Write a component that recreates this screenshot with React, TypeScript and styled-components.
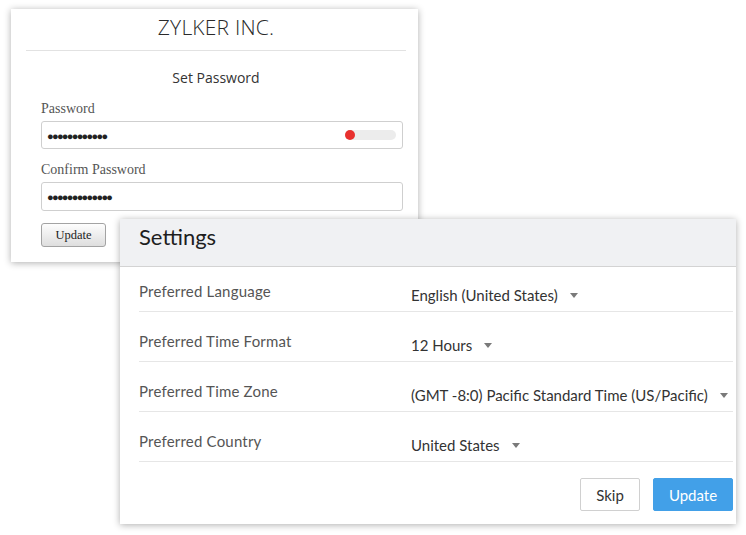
import styled, { createGlobalStyle } from "styled-components";

const GlobalStyle = createGlobalStyle`
  html, body { margin: 0; padding: 0; background: #fff; }
  * { box-sizing: border-box; }
`;

const Canvas = styled.div`
  position: relative;
  width: 746px;
  height: 535px;
  background: #fff;
  overflow: hidden;
`;

const Window = styled.div<{ $left: number; $top: number; $w: number; $h: number }>`
  position: absolute;
  left: ${(p) => p.$left}px;
  top: ${(p) => p.$top}px;
  width: ${(p) => p.$w}px;
  height: ${(p) => p.$h}px;
  background: #fff;
  box-shadow: 0 1px 7px rgba(0, 0, 0, 0.32);
`;

/* ---------- password card ---------- */

const PasswordCard = styled(Window)`
  padding: 0 12px 0 15px;
  display: flex;
  flex-direction: column;
`;

const Brand = styled.div`
  height: 42px;
  border-bottom: 1px solid #e2e2e2;
  display: flex;
  align-items: center;
  justify-content: center;
  padding-bottom: 5px;
  font-family: "Open Sans", sans-serif;
  font-weight: 300;
  font-size: 21px;
  color: #2a2a2a;
  letter-spacing: 0.2px;
`;

const Form = styled.div`
  display: flex;
  flex-direction: column;
  padding: 0 3px 0 15px;
`;

const FormTitle = styled.div`
  margin: 17px -3px 0 -15px;
  text-align: center;
  font-family: "Open Sans", sans-serif;
  font-size: 14px;
  line-height: 20px;
  color: #333;
`;

const FieldLabel = styled.div`
  margin-top: 13px;
  font-family: "Liberation Serif", serif;
  font-size: 14px;
  line-height: 16px;
  color: #555;
`;

const Input = styled.div<{ $h?: number }>`
  margin-top: 4px;
  height: ${(p) => p.$h ?? 28}px;
  border: 1px solid #cfcfcf;
  border-radius: 3px;
  display: flex;
  align-items: center;
  justify-content: space-between;
  padding: 0 6px 0 5px;
`;

const Dots = styled.span`
  font-family: "Liberation Sans", sans-serif;
  font-size: 11px;
  letter-spacing: -1.7px;
  color: #222;
  padding-top: 1px;
`;

const Meter = styled.div`
  width: 51px;
  height: 10px;
  border-radius: 5px;
  background: #ececec;
  display: flex;
  align-items: center;
`;

const MeterFill = styled.div`
  width: 10px;
  height: 10px;
  border-radius: 50%;
  background: #e8302e;
`;

const OldButton = styled.button`
  margin-top: 12px;
  width: 65px;
  height: 24px;
  border: 1px solid #a3a3a3;
  border-radius: 3px;
  background: linear-gradient(#fdfdfd, #dedede);
  font-family: "Liberation Serif", serif;
  font-size: 12.5px;
  color: #222;
  padding: 0;
`;

/* ---------- settings card ---------- */

const SettingsCard = styled(Window)`
  display: flex;
  flex-direction: column;
`;

const SettingsHeader = styled.div`
  height: 48px;
  background: #f0f1f3;
  border-bottom: 1px solid #d3d3d3;
  padding: 4px 0 0 19px;
  font-family: Lato, sans-serif;
  font-size: 22px;
  line-height: 28px;
  color: #1e1e1e;
`;

const SettingsBody = styled.div`
  padding: 0 3px 0 19px;
  display: flex;
  flex-direction: column;
`;

const Row = styled.div`
  height: 50px;
  border-bottom: 1px solid #e6e6e6;
  display: flex;
  align-items: flex-end;
  font-family: Lato, sans-serif;
  font-size: 15px;
  white-space: nowrap;

  &:first-child {
    height: 45px;
  }
`;

const RowLabel = styled.div`
  width: 272px;
  flex-shrink: 0;
  padding-bottom: 11px;
  letter-spacing: 0.2px;
  color: #555;
`;

const RowValue = styled.div`
  display: flex;
  align-items: center;
  padding-bottom: 7px;
  color: #333;
`;

const Caret = styled.span`
  margin-left: 12px;
  width: 0;
  height: 0;
  border-left: 4.5px solid transparent;
  border-right: 4.5px solid transparent;
  border-top: 5px solid #7a7a7a;
`;

const Footer = styled.div`
  display: flex;
  justify-content: flex-end;
  gap: 13px;
  padding-top: 16px;
`;

const Button = styled.button<{ $primary?: boolean }>`
  height: 33px;
  width: ${(p) => (p.$primary ? 80 : 60)}px;
  border: 1px solid ${(p) => (p.$primary ? "#42a0e8" : "#d0d0d0")};
  border-radius: 2px;
  background: ${(p) => (p.$primary ? "#42a0e8" : "#fff")};
  color: ${(p) => (p.$primary ? "#fff" : "#333")};
  font-family: Lato, sans-serif;
  font-size: 15px;
  padding: 0;
`;

const settings = [
  { label: "Preferred Language", value: "English (United States)" },
  { label: "Preferred Time Format", value: "12 Hours" },
  { label: "Preferred Time Zone", value: "(GMT -8:0) Pacific Standard Time (US/Pacific)" },
  { label: "Preferred Country", value: "United States" },
];

export default function App() {
  return (
    <>
      <GlobalStyle />
      <Canvas>
        <PasswordCard $left={11} $top={9} $w={407} $h={253}>
          <Brand>ZYLKER INC.</Brand>
          <Form>
            <FormTitle>Set Password</FormTitle>
            <FieldLabel>Password</FieldLabel>
            <Input>
              <Dots>{"●".repeat(12)}</Dots>
              <Meter>
                <MeterFill />
              </Meter>
            </Input>
            <FieldLabel>Confirm Password</FieldLabel>
            <Input $h={29}>
              <Dots>{"●".repeat(13)}</Dots>
            </Input>
            <div>
              <OldButton>Update</OldButton>
            </div>
          </Form>
        </PasswordCard>

        <SettingsCard $left={120} $top={219} $w={616} $h={305}>
          <SettingsHeader>Settings</SettingsHeader>
          <SettingsBody>
            {settings.map((s) => (
              <Row key={s.label}>
                <RowLabel>{s.label}</RowLabel>
                <RowValue>
                  {s.value}
                  <Caret />
                </RowValue>
              </Row>
            ))}
            <Footer>
              <Button>Skip</Button>
              <Button $primary>Update</Button>
            </Footer>
          </SettingsBody>
        </SettingsCard>
      </Canvas>
    </>
  );
}
